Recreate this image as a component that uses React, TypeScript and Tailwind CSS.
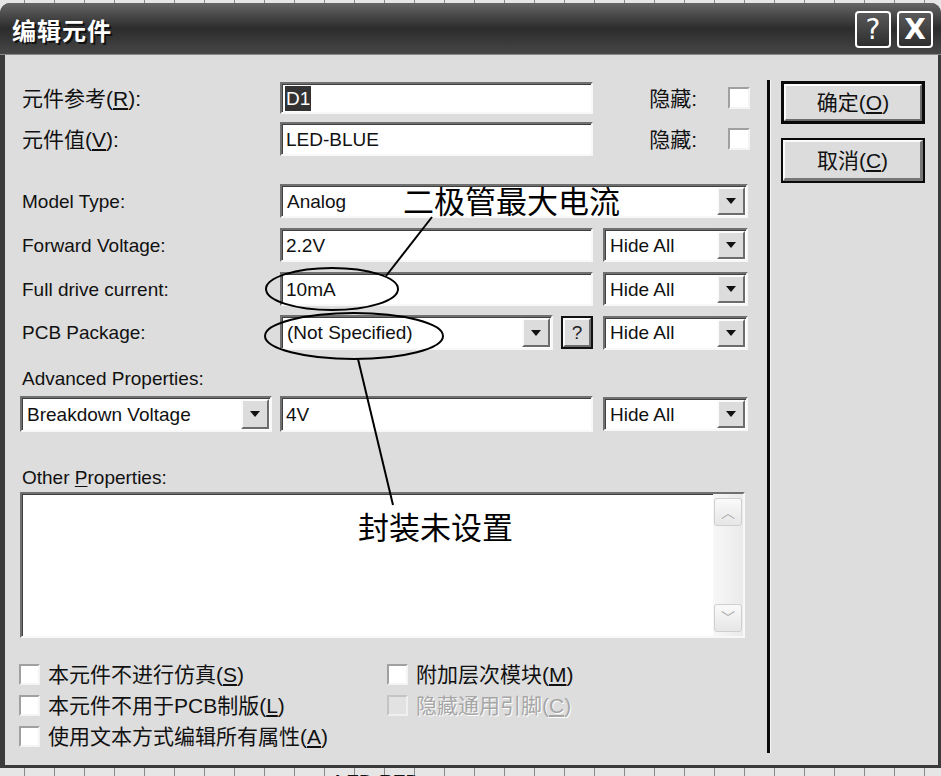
import React from 'react';

const sunken =
  'border-2 border-t-[#707070] border-l-[#707070] border-b-[#f8f8f8] border-r-[#f8f8f8] shadow-[inset_1px_1px_0_#404040] bg-white';
const raised =
  'border-2 border-t-[#fbfbfb] border-l-[#fbfbfb] border-b-[#6c6c6c] border-r-[#6c6c6c] bg-[#dcdcdc]';
const checkBox =
  'w-[21px] h-[21px] shrink-0 border-2 border-t-[#a0a0a0] border-l-[#a0a0a0] border-b-[#f4f4f4] border-r-[#f4f4f4] bg-white';

function Arrow() {
  return <span className="block w-0 h-0 border-x-[5px] border-x-transparent border-t-[6px] border-t-[#111]" />;
}

function DropBtn() {
  return (
    <div className={`w-[28px] shrink-0 flex items-center justify-center ${raised}`}>
      <Arrow />
    </div>
  );
}

function Select({ className, text }: { className: string; text: string }) {
  return (
    <div className={`flex items-stretch p-[1px] ${sunken} ${className}`}>
      <div className="flex-1 flex items-center pl-[4px] text-[19px] leading-none text-[#111] whitespace-nowrap overflow-hidden">
        {text}
      </div>
      <DropBtn />
    </div>
  );
}

function Input({ className, children }: { className: string; children: React.ReactNode }) {
  return (
    <div className={`flex items-center pl-[2px] text-[19px] leading-none text-[#111] whitespace-nowrap ${sunken} ${className}`}>
      {children}
    </div>
  );
}

function Label({ children, cjk }: { children: React.ReactNode; cjk?: boolean }) {
  return (
    <div
      className={
        cjk
          ? 'w-[260px] shrink-0 pl-[2px] text-[21px] leading-none text-[#111] whitespace-nowrap'
          : 'w-[260px] shrink-0 pl-[2px] text-[19px] leading-none text-[#111] whitespace-nowrap'
      }
    >
      {children}
    </div>
  );
}

function HideAll() {
  return <Select className="w-[145px] h-[34px] ml-[10px]" text="Hide All" />;
}

function CheckRow({ children, disabled }: { children: React.ReactNode; disabled?: boolean }) {
  return (
    <div className="flex items-center h-[22px]">
      <div
        className={
          disabled
            ? 'w-[21px] h-[21px] shrink-0 border-2 border-t-[#c4c4c4] border-l-[#c4c4c4] border-b-[#f0f0f0] border-r-[#f0f0f0] bg-[#e2e2e2]'
            : checkBox
        }
      />
      <div
        className={
          disabled
            ? 'ml-[8px] text-[21px] leading-none whitespace-nowrap text-[#a6a6a6] [text-shadow:1px_1px_0_#ffffff]'
            : 'ml-[8px] text-[21px] leading-none whitespace-nowrap text-[#111]'
        }
      >
        {children}
      </div>
    </div>
  );
}

function Ticks({ className }: { className: string }) {
  return (
    <div
      className={`bg-[#e6e6e6] bg-[repeating-linear-gradient(90deg,#e6e6e6_0px,#e6e6e6_24px,#8a8a8a_24px,#8a8a8a_25px,#e6e6e6_25px,#e6e6e6_30px)] ${className}`}
    />
  );
}

export default function App() {
  return (
    <div className="relative w-[941px] h-[776px] overflow-hidden bg-[#e6e6e6] font-['Liberation_Sans','Noto_Sans_CJK_SC',sans-serif]">
      <Ticks className="h-[3px] w-full" />
      {/* dialog */}
      <div className="flex flex-col h-[765px] bg-[#3a3a3a] rounded-t-[10px] overflow-hidden">
        {/* title bar */}
        <div className="h-[52px] shrink-0 flex items-center bg-linear-to-b from-[#666666] via-[#2c2c2c] to-[#474747] border-b border-b-[#8a8a8a]">
          <div className="pl-[12px] pt-[3px] text-[24px] font-bold leading-none text-white tracking-[1px] [text-shadow:2px_2px_0_#111111] font-['Noto_Sans_CJK_SC',sans-serif]">
            编辑元件
          </div>
          <div className="flex-1" />
          <div className="flex gap-[6px] mr-[8px] mt-[2px]">
            <div className="w-[36px] h-[37px] flex items-center justify-center border-2 border-white rounded-[4px] bg-linear-to-b from-[#5a5a5a] to-[#2e2e2e] text-white text-[28px] leading-none font-['DejaVu_Sans',sans-serif]">
              ?
            </div>
            <div className="w-[36px] h-[37px] flex items-center justify-center border-2 border-white rounded-[4px] bg-linear-to-b from-[#5a5a5a] to-[#2e2e2e] text-white text-[28px] font-bold leading-none font-['DejaVu_Sans',sans-serif]">
              X
            </div>
          </div>
        </div>

        {/* body */}
        <div className="flex-1 flex ml-[5px] mr-[3px] mb-[3px] bg-[#dddddd]">
          {/* left column */}
          <div className="w-[762px] shrink-0 pl-[15px] flex flex-col">
            <div className="flex items-center h-[32px] mt-[27px]">
              <Label cjk>
                元件参考(<u className="underline-offset-2">R</u>):
              </Label>
              <Input className="w-[313px] h-[32px]">
                <span className="bg-[#333333] text-white px-[1px] py-[3px] ml-[1px]">D1</span>
              </Input>
              <div className="w-[135px] text-right pr-[31px] text-[21px] leading-none text-[#111]">隐藏:</div>
              <div className={checkBox + ' w-[22px] h-[22px]'} />
            </div>
            <div className="flex items-center h-[34px] mt-[8px]">
              <Label cjk>
                元件值(<u className="underline-offset-2">V</u>):
              </Label>
              <Input className="w-[313px] h-[34px]">
                <span className="ml-[2px]">LED-BLUE</span>
              </Input>
              <div className="w-[135px] text-right pr-[31px] text-[21px] leading-none text-[#111]">隐藏:</div>
              <div className={checkBox + ' w-[22px] h-[22px]'} />
            </div>
            <div className="flex items-center h-[34px] mt-[28px]">
              <Label>Model Type:</Label>
              <Select className="w-[468px] h-[34px]" text="Analog" />
            </div>
            <div className="flex items-center h-[34px] mt-[10px]">
              <Label>Forward Voltage:</Label>
              <Input className="w-[313px] h-[34px]">
                <span className="ml-[2px]">2.2V</span>
              </Input>
              <HideAll />
            </div>
            <div className="flex items-center h-[34px] mt-[10px]">
              <Label>Full drive current:</Label>
              <Input className="w-[313px] h-[34px]">
                <span className="ml-[2px]">10mA</span>
              </Input>
              <HideAll />
            </div>
            <div className="flex items-center h-[35px] mt-[9px]">
              <Label>PCB Package:</Label>
              <Select className="w-[273px] h-[35px]" text="(Not Specified)" />
              <div className="w-[32px] h-[33px] ml-[8px] border-2 border-[#111] flex">
                <div className={`flex-1 flex items-center justify-center text-[19px] leading-none text-[#222] ${raised}`}>?</div>
              </div>
              <HideAll />
            </div>
            <div className="h-[24px] mt-[16px] flex items-center pl-[2px] text-[19px] leading-none text-[#111]">
              Advanced Properties:
            </div>
            <div className="flex items-center h-[36px] mt-[6px]">
              <Select className="w-[252px] h-[36px]" text="Breakdown Voltage" />
              <Input className="w-[313px] h-[36px] ml-[8px]">
                <span className="ml-[2px]">4V</span>
              </Input>
              <HideAll />
            </div>
            <div className="h-[24px] mt-[33px] flex items-center pl-[2px] text-[19px] leading-none text-[#111]">
              Other&nbsp;<u className="underline-offset-2">P</u>roperties:
            </div>
            <div className={`w-[725px] h-[146px] mt-[3px] flex ${sunken}`}>
              <div className="flex-1" />
              <div className="w-[30px] flex flex-col justify-between py-[4px] px-[1px] bg-linear-to-r from-[#f7f7f7] to-[#eaeaea]">
                <div className="h-[28px] rounded-[3px] border border-[#cfcfcf] bg-linear-to-b from-[#fafafa] to-[#e6e6e6] flex items-center justify-center text-[#a8a8a8] text-[14px] leading-none">
                  ︿
                </div>
                <div className="h-[28px] rounded-[3px] border border-[#cfcfcf] bg-linear-to-b from-[#fafafa] to-[#e6e6e6] flex items-center justify-center text-[#a8a8a8] text-[14px] leading-none">
                  ﹀
                </div>
              </div>
            </div>
            <div className="grid grid-cols-[368px_1fr] gap-y-[9px] mt-[25px] -ml-[1px]">
              <CheckRow>
                本元件不进行仿真(<u className="underline-offset-2">S</u>)
              </CheckRow>
              <CheckRow>
                附加层次模块(<u className="underline-offset-2">M</u>)
              </CheckRow>
              <CheckRow>
                本元件不用于PCB制版(<u className="underline-offset-2">L</u>)
              </CheckRow>
              <CheckRow disabled>
                隐藏通用引脚(<u className="underline-offset-2">C</u>)
              </CheckRow>
              <CheckRow>
                使用文本方式编辑所有属性(<u className="underline-offset-2">A</u>)
              </CheckRow>
            </div>
          </div>

          {/* separator */}
          <div className="w-[4px] h-[673px] mt-[25px] flex shrink-0">
            <div className="w-[3px] bg-[#0a0a0a]" />
            <div className="w-[1px] bg-[#f6f6f6]" />
          </div>

          {/* right column */}
          <div className="flex flex-col pl-[10px]">
            <div className="w-[144px] h-[43px] mt-[26px] border-[3px] border-[#0a0a0a] flex">
              <div className={`flex-1 flex items-center justify-center text-[21px] leading-none text-[#111] ${raised}`}>
                确定(<u className="underline-offset-2">O</u>)
              </div>
            </div>
            <div className="w-[144px] h-[45px] mt-[14px] border-2 border-[#0a0a0a] flex">
              <div className="flex-1 flex items-center justify-center text-[21px] leading-none text-[#111] border-2 border-t-[#fbfbfb] border-l-[#fbfbfb] border-b-[#777777] border-r-[#777777] border-b-[3px] border-r-[3px] bg-[#dcdcdc]">
                取消(<u className="underline-offset-2">C</u>)
              </div>
            </div>
          </div>
        </div>
      </div>
      {/* bottom strip */}
      <div className="h-[8px] overflow-hidden relative bg-[#e6e6e6] bg-[repeating-linear-gradient(90deg,#e6e6e6_0px,#e6e6e6_24px,#8a8a8a_24px,#8a8a8a_25px,#e6e6e6_25px,#e6e6e6_30px)]">
        <div className="pl-[335px] pt-[4px] text-[19px] leading-none text-[#111] font-bold">LED-RED</div>
      </div>

      {/* annotations */}
      <svg className="absolute left-0 top-0 pointer-events-none" width="941" height="776" viewBox="0 0 941 776">
        <ellipse cx="332" cy="289" rx="66" ry="21" fill="none" stroke="#000" strokeWidth="2" />
        <ellipse cx="354" cy="336" rx="89" ry="23" fill="none" stroke="#000" strokeWidth="2" />
        <line x1="432" y1="217" x2="386" y2="276" stroke="#000" strokeWidth="2" />
        <line x1="358" y1="359" x2="393" y2="505" stroke="#000" strokeWidth="2" />
      </svg>
      <div className="absolute left-[403px] top-[184px] text-[31px] leading-none text-black whitespace-nowrap font-['Noto_Sans_CJK_SC',sans-serif]">
        二极管最大电流
      </div>
      <div className="absolute left-[358px] top-[510px] text-[31px] leading-none text-black whitespace-nowrap font-['Noto_Sans_CJK_SC',sans-serif]">
        封装未设置
      </div>
    </div>
  );
}
